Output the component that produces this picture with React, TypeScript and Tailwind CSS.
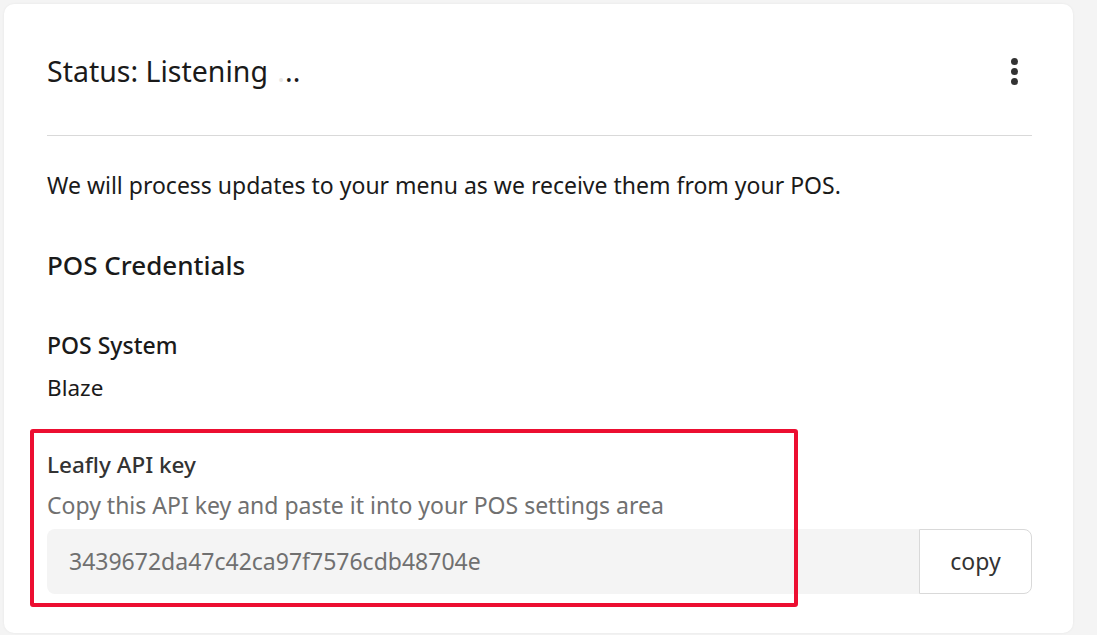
import React from 'react';

const font = { fontFamily: '"Noto Sans", "Open Sans", sans-serif' };

export default function App() {
  return (
    <div className="min-h-[635px] w-full bg-[#f4f4f4] p-[4px] pr-[24px]" style={font}>
      <div className="rounded-[10px] bg-white pb-[39px] pl-[43px] pr-[41px] pt-[39px] shadow-[0_0_3px_rgba(0,0,0,0.06)]">
        {/* Header */}
        <div className="flex items-center justify-between pb-[36px]">
          <h2 className="text-[28.5px] leading-[56px] text-[#1a1a1a]">
            Status: Listening{' '}
            <span className="ml-[2px] tracking-[0px]">
              <span className="text-[#e5e5e5]">.</span>
              <span>.</span>
              <span>.</span>
            </span>
          </h2>
          <button className="mr-[10px] flex h-[32px] w-[16px] flex-col items-center justify-center gap-[3px]">
            <span className="h-[7px] w-[7px] rounded-full bg-[#333]" />
            <span className="h-[7px] w-[7px] rounded-full bg-[#333]" />
            <span className="h-[7px] w-[7px] rounded-full bg-[#333]" />
          </button>
        </div>
        <div className="h-px bg-[#d9d9d9]" />

        <p className="mt-[33px] text-[23px] leading-[32px] text-[#1a1a1a]">
          We will process updates to your menu as we receive them from your POS.
        </p>

        <h3 className="mt-[47px] text-[26px] font-medium leading-[34px] text-[#1a1a1a]">POS Credentials</h3>

        <div className="mt-[47px]">
          <div className="text-[23px] font-medium leading-[32px] text-[#1a1a1a]">POS System</div>
          <div className="mt-[11px] text-[22.5px] leading-[32px] text-[#1a1a1a]">Blaze</div>
        </div>

        <div className="relative mt-[45px]">
          <div className="pointer-events-none absolute left-[-17px] top-[-20px] h-[178px] w-[768px] rounded-[3px] border-[4px] border-[#ec0e31]" />
          <div className="text-[22.5px] font-medium leading-[32px] text-[#333]">Leafly API key</div>
          <div className="mt-[8px] text-[23px] leading-[32px] text-[#707070]">
            Copy this API key and paste it into your POS settings area
          </div>
          <div className="mt-[8px] flex h-[65px]">
            <div className="flex flex-1 items-center rounded-l-[8px] bg-[#f4f4f4] px-[22px] text-[23px] text-[#707070]">
              3439672da47c42ca97f7576cdb48704e
            </div>
            <button className="w-[113px] rounded-r-[8px] border border-[#d9d9d9] bg-white text-[23px] text-[#333]">
              copy
            </button>
          </div>
        </div>
      </div>
    </div>
  );
}
